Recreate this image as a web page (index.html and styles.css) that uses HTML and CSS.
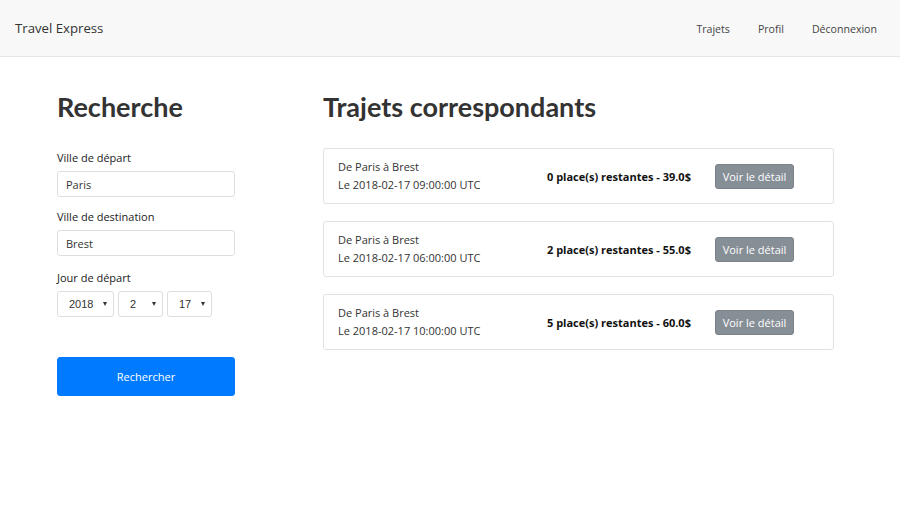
FILE: index.html
```html
<!DOCTYPE html>
<html lang="fr">
<head>
<meta charset="utf-8">
<title>Travel Express</title>
<link rel="stylesheet" href="styles.css">
</head>
<body>
<nav class="navbar">
  <a class="brand" href="#">Travel Express</a>
  <ul class="nav-links">
    <li><a href="#">Trajets</a></li>
    <li><a href="#">Profil</a></li>
    <li><a href="#">Déconnexion</a></li>
  </ul>
</nav>
<main class="main">
  <section class="search">
    <h1 class="title">Recherche</h1>
    <form class="form">
      <label class="label">Ville de départ</label>
      <input class="input" type="text" value="Paris">
      <label class="label">Ville de destination</label>
      <input class="input input-last" type="text" value="Brest">
      <label class="label">Jour de départ</label>
      <div class="selects">
        <span class="select-wrap w-year"><select class="select"><option>2018</option></select></span>
        <span class="select-wrap w-small"><select class="select"><option>2</option></select></span>
        <span class="select-wrap w-small"><select class="select"><option>17</option></select></span>
      </div>
      <button class="btn-primary" type="button">Rechercher</button>
    </form>
  </section>
  <section class="results">
    <h1 class="title title-results">Trajets correspondants</h1>
    <div class="card">
      <div class="trip">
        <div>De Paris à Brest</div>
        <div>Le 2018-02-17 09:00:00 UTC</div>
      </div>
      <div class="seats">0 place(s) restantes - 39.0$</div>
      <button class="btn-secondary" type="button">Voir le détail</button>
    </div>
    <div class="card">
      <div class="trip">
        <div>De Paris à Brest</div>
        <div>Le 2018-02-17 06:00:00 UTC</div>
      </div>
      <div class="seats">2 place(s) restantes - 55.0$</div>
      <button class="btn-secondary" type="button">Voir le détail</button>
    </div>
    <div class="card">
      <div class="trip">
        <div>De Paris à Brest</div>
        <div>Le 2018-02-17 10:00:00 UTC</div>
      </div>
      <div class="seats">5 place(s) restantes - 60.0$</div>
      <button class="btn-secondary" type="button">Voir le détail</button>
    </div>
  </section>
</main>
</body>
</html>
```
FILE: styles.css
```css
* { box-sizing: border-box; }
html, body { margin: 0; padding: 0; }
body {
  font-family: "Open Sans", "Noto Sans", sans-serif;
  font-size: 11px;
  color: #212529;
  background: #fff;
}
.navbar {
  height: 57px;
  background: #f8f8f8;
  border-bottom: 1px solid #e6e6e6;
  display: flex;
  align-items: center;
  justify-content: space-between;
  padding: 0 23px 0 15px;
}
.brand {
  font-size: 13.2px;
  color: #333;
  text-decoration: none;
}
.nav-links {
  list-style: none;
  display: flex;
  gap: 28px;
  margin: 0;
  padding: 0;
}
.nav-links a {
  color: #444;
  text-decoration: none;
  font-size: 10.6px;
}
.main {
  display: flex;
  gap: 88px;
  padding: 0 57px;
}
.search { width: 178px; }
.results { width: 511px; }
.title {
  font-family: Lato, "Open Sans", sans-serif;
  font-size: 27px;
  font-weight: 700;
  color: #333;
  margin: 34px 0 27px;
  line-height: 1.2;
}
.title-results { margin-bottom: 25px; }
.form { display: flex; flex-direction: column; }
.label {
  display: block;
  color: #222;
  margin-bottom: 6px;
}
.input {
  height: 26px;
  border: 1px solid #dcdfe2;
  border-radius: 3px;
  padding: 0 8px;
  font-family: inherit;
  font-size: 11px;
  color: #333;
  margin-bottom: 12px;
}
.input-last { margin-bottom: 14px; }
.selects { display: flex; gap: 4px; margin-bottom: 40px; }
.select-wrap {
  position: relative;
  display: inline-block;
  height: 26px;
}
.w-year { width: 57px; }
.w-small { width: 45px; }
.select-wrap::after {
  content: "";
  position: absolute;
  right: 7px;
  top: 11px;
  border-left: 2.5px solid transparent;
  border-right: 2.5px solid transparent;
  border-top: 4px solid #333;
  pointer-events: none;
}
.select {
  -webkit-appearance: none;
  appearance: none;
  width: 100%;
  height: 26px;
  border: 1px solid #dcdfe2;
  border-radius: 3px;
  background: #fff;
  padding: 0 0 0 11px;
  font-family: "Liberation Sans", Arial, sans-serif;
  font-size: 11px;
  color: #333;
}
.btn-primary {
  height: 39px;
  background: #007bff;
  color: #fff;
  border: 1px solid #007bff;
  border-radius: 3px;
  font-family: inherit;
  font-size: 11px;
}
.card {
  display: flex;
  align-items: center;
  height: 56px;
  border: 1px solid #e2e2e2;
  border-radius: 3px;
  padding: 0 14px;
  margin-bottom: 17px;
}
.trip {
  width: 209px;
  line-height: 18px;
  color: #333;
}
.seats {
  width: 168px;
  font-weight: 700;
  color: #111;
}
.btn-secondary {
  height: 25px;
  width: 79px;
  background: #868e96;
  color: #fff;
  border: 1px solid #7a8188;
  border-radius: 3px;
  font-family: inherit;
  font-size: 11px;
  padding: 0;
}
```
